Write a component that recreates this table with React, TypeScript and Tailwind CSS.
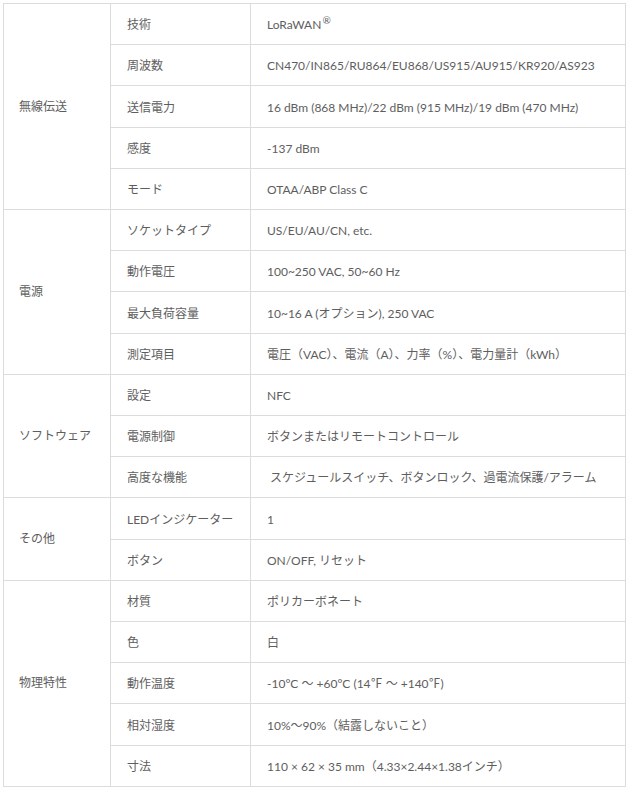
import React from "react";

type Group = { name: string; rows: [string, React.ReactNode][] };

const groups: Group[] = [
  {
    name: "無線伝送",
    rows: [
      ["技術", <span>LoRaWAN<span className="text-[10px] relative -top-[5px] ml-[1px]">®</span></span>],
      ["周波数", "CN470/IN865/RU864/EU868/US915/AU915/KR920/AS923"],
      ["送信電力", "16 dBm (868 MHz)/22 dBm (915 MHz)/19 dBm (470 MHz)"],
      ["感度", "-137 dBm"],
      ["モード", "OTAA/ABP Class C"],
    ],
  },
  {
    name: "電源",
    rows: [
      ["ソケットタイプ", "US/EU/AU/CN, etc."],
      ["動作電圧", "100~250 VAC, 50~60 Hz"],
      ["最大負荷容量", "10~16 A (オプション), 250 VAC"],
      ["測定項目", "電圧（VAC）、電流（A）、力率（%）、電力量計（kWh）"],
    ],
  },
  {
    name: "ソフトウェア",
    rows: [
      ["設定", "NFC"],
      ["電源制御", "ボタンまたはリモートコントロール"],
      ["高度な機能", "\u00a0スケジュールスイッチ、ボタンロック、過電流保護/アラーム"],
    ],
  },
  {
    name: "その他",
    rows: [
      ["LEDインジケーター", "1"],
      ["ボタン", "ON/OFF, リセット"],
    ],
  },
  {
    name: "物理特性",
    rows: [
      ["材質", "ポリカーボネート"],
      ["色", "白"],
      ["動作温度", "-10°C ～ +60°C (14℉ ～ +140℉)"],
      ["相対湿度", "10%～90%（結露しないこと）"],
      ["寸法", "110 × 62 × 35 mm（4.33×2.44×1.38インチ）"],
    ],
  },
];

export default function App() {
  return (
    <div
      className="bg-white w-[633px] h-[797px] pt-[3px] pl-[3px]"
      style={{ fontFamily: '"Lato", "Noto Sans CJK JP", sans-serif' }}
    >
      <table className="w-[623px] h-[784px] border-collapse border border-[#dcdcdc] text-[12px] text-[#5e5e5e] table-fixed">
        <colgroup>
          <col className="w-[107px]" />
          <col className="w-[140px]" />
          <col />
        </colgroup>
        <tbody>
          {groups.map((g) =>
            g.rows.map((r, i) => (
              <tr key={g.name + i}>
                {i === 0 && (
                  <td
                    rowSpan={g.rows.length}
                    className="border border-[#dcdcdc] pl-[15px] align-middle whitespace-nowrap"
                  >
                    {g.name}
                  </td>
                )}
                <td className="border border-[#dcdcdc] pl-[16px] pt-[2px] align-middle whitespace-nowrap">
                  {r[0]}
                </td>
                <td className="border border-[#dcdcdc] pl-[16px] pt-[2px] align-middle whitespace-nowrap">
                  {r[1]}
                </td>
              </tr>
            ))
          )}
        </tbody>
      </table>
    </div>
  );
}
